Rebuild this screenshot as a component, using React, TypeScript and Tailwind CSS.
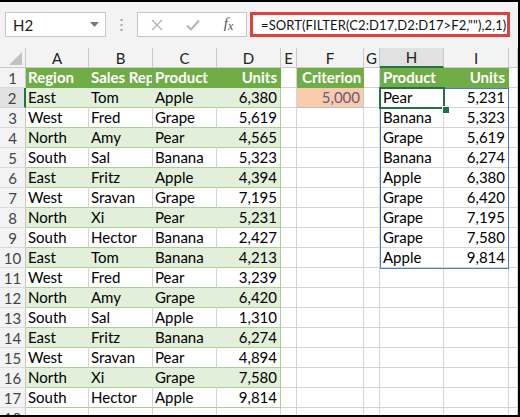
import React from 'react';

const data: string[][] = [
  ['East', 'Tom', 'Apple', '6,380'],
  ['West', 'Fred', 'Grape', '5,619'],
  ['North', 'Amy', 'Pear', '4,565'],
  ['South', 'Sal', 'Banana', '5,323'],
  ['East', 'Fritz', 'Apple', '4,394'],
  ['West', 'Sravan', 'Grape', '7,195'],
  ['North', 'Xi', 'Pear', '5,231'],
  ['South', 'Hector', 'Banana', '2,427'],
  ['East', 'Tom', 'Banana', '4,213'],
  ['West', 'Fred', 'Pear', '3,239'],
  ['North', 'Amy', 'Grape', '6,420'],
  ['South', 'Sal', 'Apple', '1,310'],
  ['East', 'Fritz', 'Banana', '6,274'],
  ['West', 'Sravan', 'Pear', '4,894'],
  ['North', 'Xi', 'Grape', '7,580'],
  ['South', 'Hector', 'Apple', '9,814'],
];

const result: string[][] = [
  ['Pear', '5,231'],
  ['Banana', '5,323'],
  ['Grape', '5,619'],
  ['Banana', '6,274'],
  ['Apple', '6,380'],
  ['Grape', '6,420'],
  ['Grape', '7,195'],
  ['Grape', '7,580'],
  ['Apple', '9,814'],
];

const base = 'box-border flex items-end pb-[1px] overflow-hidden whitespace-nowrap border-r border-b';
const plain = base + ' bg-white border-[#d4d4d4]';
const headCell = base + ' bg-[#70ad47] border-[#70ad47] text-white font-bold';

function Cell({ cls, children }: { cls: string; children?: React.ReactNode }) {
  return <div className={cls}>{children}</div>;
}

function RowHeader({ n }: { n: number }) {
  const sel = n === 2;
  return (
    <div
      className={
        sel
          ? 'box-border flex items-center justify-center bg-[#e1e1e1] border-b border-b-[#d4d4d4] border-r-2 border-r-[#217346] text-[#444]'
          : 'box-border flex items-center justify-center bg-[#f3f3f3] border-b border-b-[#dcdcdc] border-r border-r-[#c8c8c8] text-[#444]'
      }
    >
      {n}
    </div>
  );
}

function Row({ n }: { n: number }) {
  const cells: React.ReactNode[] = [<RowHeader key="h" n={n} />];
  if (n === 1) {
    cells.push(<Cell key="a" cls={headCell + ' pl-[2px]'}>Region</Cell>);
    cells.push(<Cell key="b" cls={headCell + ' pl-[2px]'}>Sales Rep</Cell>);
    cells.push(<Cell key="c" cls={headCell + ' pl-[2px]'}>Product</Cell>);
    cells.push(<Cell key="d" cls={headCell + ' justify-end pr-[3px] border-r-[#70ad47]'}>Units</Cell>);
  } else if (n <= 17) {
    const d = data[n - 2];
    const green = n % 2 === 0;
    const c = green
      ? base + ' bg-[#e2efda] border-r-[#e2efda] border-b-[#a9d08e]'
      : base + ' bg-white border-r-[#d4d4d4] border-b-[#a9d08e]';
    const cd = green
      ? base + ' bg-[#e2efda] border-r-[#a9d08e] border-b-[#a9d08e] justify-end pr-[3px]'
      : base + ' bg-white border-r-[#a9d08e] border-b-[#a9d08e] justify-end pr-[3px]';
    cells.push(<Cell key="a" cls={c + ' pl-[2px]'}>{d[0]}</Cell>);
    cells.push(<Cell key="b" cls={c + ' pl-[2px]'}>{d[1]}</Cell>);
    cells.push(<Cell key="c" cls={c + ' pl-[2px]'}>{d[2]}</Cell>);
    cells.push(<Cell key="d" cls={cd}>{d[3]}</Cell>);
  } else {
    cells.push(<Cell key="a" cls={plain} />);
    cells.push(<Cell key="b" cls={plain} />);
    cells.push(<Cell key="c" cls={plain} />);
    cells.push(<Cell key="d" cls={plain} />);
  }
  cells.push(<Cell key="e" cls={plain} />);
  if (n === 1) {
    cells.push(<Cell key="f" cls={headCell + ' pl-[5px]'}>Criterion</Cell>);
  } else if (n === 2) {
    cells.push(
      <Cell key="f" cls={base + ' bg-[#f8cbad] border-r-[#c9c9c9] border-b-[#bfbfbf] justify-end pr-[3px] text-[#6a5a78]'}>
        5,000
      </Cell>
    );
  } else {
    cells.push(<Cell key="f" cls={plain} />);
  }
  cells.push(<Cell key="g" cls={plain} />);
  if (n === 1) {
    cells.push(<Cell key="h" cls={headCell + ' pl-[3px]'}>Product</Cell>);
    cells.push(<Cell key="i" cls={headCell + ' justify-end pr-[3px]'}>Units</Cell>);
  } else if (n >= 2 && n <= 10) {
    const r = result[n - 2];
    cells.push(<Cell key="h" cls={plain + ' pl-[3px]'}>{r[0]}</Cell>);
    cells.push(<Cell key="i" cls={plain + ' justify-end pr-[3px]'}>{r[1]}</Cell>);
  } else {
    cells.push(<Cell key="h" cls={plain} />);
    cells.push(<Cell key="i" cls={plain} />);
  }
  cells.push(<Cell key="j" cls={plain} />);
  return <>{cells}</>;
}

const colLetters = ['A', 'B', 'C', 'D', 'E', 'F', 'G', 'H', 'I', ''];

export default function App() {
  return (
    <div className="w-[520px] h-[417px] overflow-hidden box-border border-t-2 border-r-2 border-b-2 border-black bg-[#f3f3f3] flex flex-col text-[15px] leading-[18px] text-black [font-family:Lato,sans-serif]">
      {/* Formula bar */}
      <div className="h-[46px] shrink-0 flex items-start pt-[10px] pl-[5px]">
        <div className="w-[101px] h-[25px] box-border bg-white border border-[#c6c6c6] flex items-center justify-between pl-[7px] pr-[6px] text-[15px] text-[#222]">
          <span>H2</span>
          <svg width="9" height="5" viewBox="0 0 9 5">
            <polygon points="0,0 9,0 4.5,5" fill="#777" />
          </svg>
        </div>
        <div className="w-[31px] h-[25px] flex items-center justify-center">
          <svg width="3" height="12" viewBox="0 0 3 12">
            <rect x="0.5" y="0" width="2" height="2" fill="#a6a6a6" />
            <rect x="0.5" y="5" width="2" height="2" fill="#a6a6a6" />
            <rect x="0.5" y="10" width="2" height="2" fill="#a6a6a6" />
          </svg>
        </div>
        <div className="w-[110px] h-[25px] box-border bg-white border border-[#c6c6c6] flex items-center">
          <div className="w-[36px] flex justify-center pl-[2px]">
            <svg width="12" height="12" viewBox="0 0 12 12">
              <path d="M1 1 L11 11 M11 1 L1 11" stroke="#b4b4b4" strokeWidth="1.4" fill="none" />
            </svg>
          </div>
          <div className="w-[37px] flex justify-center">
            <svg width="14" height="12" viewBox="0 0 14 12">
              <path d="M1 6.5 L5 10.5 L13 1.5" stroke="#b4b4b4" strokeWidth="2" fill="none" />
            </svg>
          </div>
          <div className="w-[35px] flex justify-center italic text-[15px] text-[#555] [font-family:'Liberation_Serif',serif]">
            <span>f</span>
            <span className="text-[12px] mt-[3px]">x</span>
          </div>
        </div>
        <div className="ml-[3px] w-[260px] h-[25px] box-border bg-white border-[3px] border-[#e0413f] flex items-center pl-[8px] text-[13px] tracking-[0.1px] text-[#111] whitespace-nowrap overflow-hidden">
          =SORT(FILTER(C2:D17,D2:D17&gt;F2,""),2,1)
        </div>
      </div>

      {/* Grid */}
      <div className="relative flex-1 overflow-hidden">
        <div className="grid grid-cols-[26px_63px_64px_64px_64px_16px_67px_16px_64px_65px_9px] auto-rows-[20px]">
          <div className="box-border bg-[#f3f3f3] border-r border-b border-[#c8c8c8] flex items-end justify-end pr-[3px] pb-[2px]">
            <svg width="13" height="13" viewBox="0 0 13 13">
              <polygon points="13,0 13,13 0,13" fill="#c2c2c2" />
            </svg>
          </div>
          {colLetters.map((l, i) =>
            l === 'H' ? (
              <div
                key={i}
                className="box-border bg-[#e1e1e1] border-r border-r-[#c8c8c8] border-b-2 border-b-[#217346] flex items-center justify-center text-[15px] text-[#222]"
              >
                {l}
              </div>
            ) : (
              <div
                key={i}
                className="box-border bg-[#f3f3f3] border-r border-r-[#c8c8c8] border-b border-b-[#c8c8c8] flex items-center justify-center text-[15px] text-[#222]"
              >
                {l}
              </div>
            )
          )}
          {Array.from({ length: 18 }, (_, i) => (
            <Row key={i} n={i + 1} />
          ))}
        </div>

        <div className="absolute left-[380px] top-[40px] w-[129px] h-[181px] border border-[#4a7bd0] pointer-events-none" />
        <div className="absolute left-[379px] top-[39px] w-[66px] h-[22px] border-2 border-[#217346] pointer-events-none" />
        <div className="absolute left-[442px] top-[58px] w-[6px] h-[6px] bg-[#217346] border border-white box-content pointer-events-none" />
      </div>
    </div>
  );
}
